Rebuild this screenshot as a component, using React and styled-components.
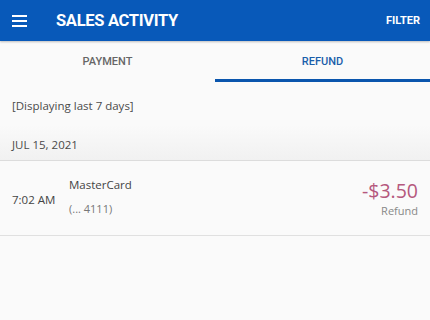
import styled, { createGlobalStyle } from 'styled-components'

const GlobalStyle = createGlobalStyle`
  html, body {
    margin: 0;
    padding: 0;
    background: #fafafa;
  }
  body {
    font-family: 'Open Sans', 'Liberation Sans', sans-serif;
  }
`

const Screen = styled.div`
  width: 430px;
  height: 320px;
  background: #fafafa;
  overflow: hidden;
`

const TopBar = styled.header`
  height: 41px;
  background: #0859b9;
  display: flex;
  align-items: center;
  padding: 0 10px 0 12px;
  box-shadow: 0 1px 2px rgba(0, 0, 0, 0.25);
  position: relative;
  z-index: 1;
`

const MenuButton = styled.div`
  width: 15px;
  display: flex;
  flex-direction: column;
  gap: 3px;
  margin-right: 29px;

  span {
    display: block;
    height: 2px;
    background: #fff;
  }
`

const Title = styled.h1`
  margin: 0;
  flex: 1;
  color: #fff;
  font-family: Roboto, 'Liberation Sans', sans-serif;
  font-weight: 700;
  font-size: 16.5px;
  letter-spacing: -0.3px;
`

const FilterButton = styled.span`
  color: #fff;
  font-family: Roboto, 'Liberation Sans', sans-serif;
  font-weight: 700;
  font-size: 11px;
`

const Tabs = styled.nav`
  display: flex;
  height: 41px;
  background: #fafafa;
`

const Tab = styled.div`
  flex: 1;
  display: flex;
  align-items: center;
  justify-content: center;
  font-family: Roboto, 'Liberation Sans', sans-serif;
  font-weight: 500;
  font-size: 11px;
  color: ${p => (p.$active ? '#1a5eaa' : '#666')};
  border-bottom: 3px solid ${p => (p.$active ? '#0a55ad' : 'transparent')};
  box-sizing: border-box;
  padding-top: 3px;
`

const Notice = styled.div`
  padding: 16px 12px 0;
  height: 27px;
  font-size: 11.5px;
  color: #4a4a4a;
`

const DateBand = styled.div`
  height: 36px;
  display: flex;
  align-items: center;
  padding: 3px 12px 0;
  box-sizing: border-box;
  background: linear-gradient(#fafafa, #f1f1f1);
  border-bottom: 1.5px solid #dcdcdc;
  font-size: 11.5px;
  color: #4a4a4a;
`

const Row = styled.div`
  height: 74px;
  display: flex;
  align-items: center;
  padding: 0 12px;
  border-bottom: 1.5px solid #e0e0e0;
  background: #fafafa;
`

const Time = styled.div`
  width: 57px;
  font-size: 11.5px;
  color: #444;
  padding-top: 2px;
`

const CardInfo = styled.div`
  flex: 1;
  display: flex;
  flex-direction: column;
  gap: 9px;
  margin-top: -4px;
`

const CardName = styled.span`
  font-size: 11.5px;
  color: #444;
`

const CardNumber = styled.span`
  font-size: 11px;
  color: #777;
`

const Amount = styled.div`
  display: flex;
  flex-direction: column;
  align-items: flex-end;
  gap: 3px;
  margin-top: 2px;
`

const Price = styled.span`
  font-size: 19.5px;
  color: #b5587d;
  line-height: 20px;
`

const Kind = styled.span`
  font-size: 11px;
  line-height: 14px;
  color: #888;
`

export default function App() {
  return (
    <Screen>
      <GlobalStyle />
      <TopBar>
        <MenuButton>
          <span />
          <span />
          <span />
        </MenuButton>
        <Title>SALES ACTIVITY</Title>
        <FilterButton>FILTER</FilterButton>
      </TopBar>
      <Tabs>
        <Tab>PAYMENT</Tab>
        <Tab $active>REFUND</Tab>
      </Tabs>
      <Notice>[Displaying last 7 days]</Notice>
      <DateBand>JUL 15, 2021</DateBand>
      <Row>
        <Time>7:02 AM</Time>
        <CardInfo>
          <CardName>MasterCard</CardName>
          <CardNumber>(... 4111)</CardNumber>
        </CardInfo>
        <Amount>
          <Price>-$3.50</Price>
          <Kind>Refund</Kind>
        </Amount>
      </Row>
    </Screen>
  )
}
